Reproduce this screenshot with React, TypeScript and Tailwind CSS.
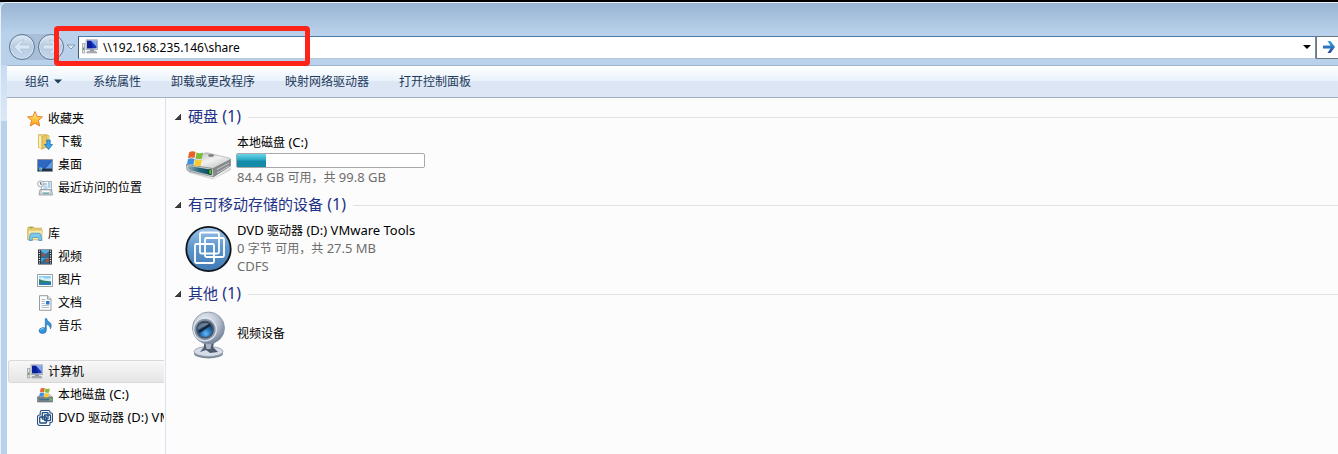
import React from 'react';

type IconProps = { className?: string };

const FONT = "font-['Noto_Sans','Noto_Sans_CJK_SC',sans-serif]";

// Latin runs are set one pixel larger than the Chinese text around them
function Mixed({ text, large = false }: { text: string; large?: boolean }) {
  const runs = text.match(/[\u3000-\uffef]+|[^\u3000-\uffef]+/g) ?? [];
  return (
    <>
      {runs.map((run, i) => (
        <span
          key={i}
          className={
            /[\u3000-\uffef]/.test(run)
              ? large ? 'text-[15px]' : 'text-[12px]'
              : large ? 'text-[16px]' : 'text-[13px]'
          }
        >
          {run}
        </span>
      ))}
    </>
  );
}

function ComputerIcon({ className = 'size-4' }: IconProps) {
  return (
    <svg viewBox="0 0 16 16" className={className} aria-hidden="true">
      <path d="M.5 4.500h2.200v9.500H.5z" fill="#e3e6e8" stroke="#7d8388" strokeWidth=".6" />
      <path d="M1 8.500h1.200V11H1z" fill="#62a155" />
      <path d="M4 .8h11.600v9.700H4z" fill="#dcdfe3" stroke="#8f96a0" strokeWidth=".7" />
      <path d="M5 1.800h9.600v7.500H5z" fill="#1739b8" />
      <path d="M9 1.800h5.600v6z" fill="#86abf0" />
      <path d="M5 1.800h4l2 7.500H5z" fill="#0b1f9b" />
      <path d="M8 10.500h4v2H8z" fill="#94999f" />
      <path d="M5.500 12.300h8.500l.8 1.700H4.700z" fill="#b9bdc2" stroke="#777c82" strokeWidth=".5" />
    </svg>
  );
}

function StarIcon({ className = 'size-4' }: IconProps) {
  return (
    <svg viewBox="0 0 16 16" className={className} aria-hidden="true">
      <defs>
        <linearGradient id="star" x1="0" y1="0" x2="0" y2="1">
          <stop offset="0" stopColor="#fff1a0" />
          <stop offset=".55" stopColor="#ffc43d" />
          <stop offset="1" stopColor="#ff9a1c" />
        </linearGradient>
      </defs>
      <path
        d="M8 .5l2.100 4.900 5.400.5-4.100 3.600 1.300 5.500L8 12.200 3.300 15l1.300-5.500L.5 5.900l5.400-.5z"
        fill="url(#star)"
        stroke="#e27a1c"
        strokeWidth=".9"
        strokeLinejoin="round"
      />
    </svg>
  );
}

function DownloadIcon({ className = 'size-4' }: IconProps) {
  return (
    <svg viewBox="0 0 16 16" className={className} aria-hidden="true">
      <path d="M1.500.7h8l2.500 1v11.800H1.500z" fill="#f6e295" stroke="#cdaa45" strokeWidth=".7" />
      <path d="M1.500.7l3.500 1.500v13l-3.500-1.700z" fill="#fbeeb4" stroke="#cdaa45" strokeWidth=".5" />
      <path d="M5 2.200l5-1.200v12l-5 2.200z" fill="#e8c661" stroke="#bf9b3b" strokeWidth=".5" />
      <path d="M9.800 6h3.400v4.500h2.400l-4.100 5-4.100-5h2.400z" fill="#39a5ea" stroke="#1665b5" strokeWidth=".7" />
    </svg>
  );
}

function DesktopIcon({ className = 'size-4' }: IconProps) {
  return (
    <svg viewBox="0 0 16 16" className={className} aria-hidden="true">
      <path d="M.5 2.500h15v12H.5z" fill="#2456ae" stroke="#8b9198" strokeWidth=".9" />
      <path d="M1 3h14L6 11.700H1z" fill="#2f68c0" />
      <path d="M15 4v7.700H8z" fill="#5d98e6" />
      <path d="M1 11.700h14V14H1z" fill="#26303e" />
      <circle cx="3.500" cy="12" r="1.900" fill="#3fa7e8" />
      <path d="M2.600 11h1v1h-1z" fill="#f07b3a" />
      <path d="M3.800 11h1v1h-1z" fill="#a5da54" />
    </svg>
  );
}

function RecentIcon({ className = 'size-4' }: IconProps) {
  return (
    <svg viewBox="0 0 16 16" className={className} aria-hidden="true">
      <path d="M4.500 1.500h10v9.500h-10z" fill="#f6f8f9" stroke="#91989d" strokeWidth=".7" />
      <path d="M6.500 5.500h4v5h-4z" fill="#b7d9ee" />
      <path d="M11 3h2.500M11 5h2.500M7 4h3M11 7h2.500" stroke="#579fc9" strokeWidth=".9" />
      <path d="M3 9.500h11.500l1 5.500H2z" fill="#cdd1d4" stroke="#838b91" strokeWidth=".7" />
      <path d="M5 10.700h7.500v1.500H5z" fill="#fff" />
      <path d="M6 13.200h6" stroke="#42a6a6" />
      <circle cx="3.600" cy="3.900" r="3.100" fill="#eef1f3" stroke="#9ca3a8" strokeWidth=".8" />
      <path d="M3.600 2v2.200h1.800" fill="none" stroke="#44515b" strokeWidth=".8" />
    </svg>
  );
}

function LibraryIcon({ className = 'size-4' }: IconProps) {
  return (
    <svg viewBox="0 0 16 16" className={className} aria-hidden="true">
      <path d="M.7 2.200l.8-1.300h5l1 1.300h7v11.500H.7z" fill="#e9cd72" stroke="#c9a546" strokeWidth=".7" />
      <path d="M2.500 1.700h3" stroke="#4ba84c" strokeWidth=".9" />
      <path d="M1.200 4.200h14.300l-.7 9.500H1.200z" fill="#f8e9a6" stroke="#d9b85c" strokeWidth=".6" />
      <path
        d="M2 14.500L3 9q.3-1.800 2-1.800h7q1.700 0 2 1.800l1 5.500h-3.300V12.500q0-1-1-1H6.300q-1 0-1 1v2z"
        fill="#7cc7ee"
        stroke="#3d8fc4"
        strokeWidth=".7"
      />
    </svg>
  );
}

function VideoIcon({ className = 'size-4' }: IconProps) {
  return (
    <svg viewBox="0 0 16 16" className={className} aria-hidden="true">
      <path d="M1 .5h14v15H1z" fill="#2b3136" />
      <path d="M4 1h8v6.500H4z" fill="#58aee0" />
      <path d="M4 8.500h8V15H4z" fill="#4c9dd4" />
      <path d="M4 2l4 3 4-2.500v5H4zM4 13l4-3.500 4 2.500v3H4z" fill="#336b91" />
      <path d="M5 5l2-1 1.500 2.500L6 7.500zM9 10l3-1v3l-3 2z" fill="#a94f3a" />
      <path d="M2.500 1.500v13M13.500 1.500v13" stroke="#e5e9e6" strokeWidth="1.300" strokeDasharray="1.200 1.200" />
    </svg>
  );
}

function PictureIcon({ className = 'size-4' }: IconProps) {
  return (
    <svg viewBox="0 0 16 16" className={className} aria-hidden="true">
      <path d="M.5 2.500h15v12H.5z" fill="#fff" stroke="#8f969c" strokeWidth=".9" />
      <path d="M2 4h12v9H2z" fill="#8dcff4" />
      <path d="M2 6q3-1.500 5 0t7 0v3H2z" fill="#d9f1fb" />
      <path d="M2 7l4 1.500 8 1v1.500H2z" fill="#2e8067" />
      <path d="M2 10.500h12V13H2z" fill="#237cb2" />
    </svg>
  );
}

function DocumentIcon({ className = 'size-4' }: IconProps) {
  return (
    <svg viewBox="0 0 16 16" className={className} aria-hidden="true">
      <path d="M2.500.7h8l3.500 3.500v11.100H2.500z" fill="#fcfdfd" stroke="#8a9196" strokeWidth=".9" />
      <path d="M10.500.7v3.500H14" fill="#dfe5e8" stroke="#8a9196" strokeWidth=".8" />
      <path d="M4.500 4.500h4M4.500 6.500h3.500M4.500 8.500h3.500M4.500 10.500h7.500M4.500 12.500h7.500" stroke="#a6aeb4" strokeWidth=".8" />
      <path d="M9 6h3.500v3.500H9z" fill="#3277cf" />
    </svg>
  );
}

function MusicIcon({ className = 'size-4' }: IconProps) {
  return (
    <svg viewBox="0 0 16 16" className={className} aria-hidden="true">
      <path
        d="M8.300.6h1.200q.5 2.200 3 3.600 3 2.200 1 6.600.1-3.400-4.200-4.800v6.400Q9.300 15 6 15.400q-3.800.1-4-2.500.1-2.700 3.500-3.200 1.700-.2 2.800.4z"
        fill="#3095de"
        stroke="#1a67aa"
        strokeWidth=".6"
      />
      <path d="M3.300 12q1-1.600 3.200-1.300" fill="none" stroke="#a6defc" />
    </svg>
  );
}

function WindowsFlag() {
  return (
    <>
      <path d="M2 2.500q3-2 6.500-.5L7.500 8Q4 6.600 1 8.500z" fill="#e8622a" />
      <path d="M9.500 2.500q3 1.500 6.500 0L15 8.500q-3.500 1.200-6.500-.2z" fill="#7fbc3c" />
      <path d="M.8 9.500q3-2 6.500-.5l-1 6Q3 13.500 0 15.500z" fill="#3e90dc" />
      <path d="M8.300 9.500q3.200 1.500 6.500 0l-1 6q-3.500 1.500-6.500 0z" fill="#fcca30" />
    </>
  );
}

function SmallDriveIcon({ className = 'size-4' }: IconProps) {
  return (
    <svg viewBox="0 0 16 16" className={className} aria-hidden="true">
      <path d="M1 9.500l3-2.500h8l3.500 3.500H.5z" fill="#d3d6d8" stroke="#85898c" strokeWidth=".5" />
      <path d="M.5 10h15v5H.5z" fill="#828b90" stroke="#5d6366" strokeWidth=".6" />
      <path d="M2 11.700h10v1.600H2z" fill="#3f7080" />
      <path d="M13 11.500h1.500v2H13z" fill="#54dc43" />
      <svg x="2" y="0" width="11" height="11" viewBox="0 0 16 17">
        <WindowsFlag />
      </svg>
    </svg>
  );
}

function SmallVmIcon({ className = 'size-4' }: IconProps) {
  return (
    <svg viewBox="0 0 16 16" className={className} aria-hidden="true">
      <path d="M5 .5h6.500q1.500 0 1.500 1.500v1h1q1.500 0 1.500 1.500V11q0 1.500-1.500 1.500h-1V14q0 1.500-1.500 1.500H3Q.5 15.500.5 13V7q0-2 2-2h.7V2.500Q3.200.5 5 .5z" fill="#fff" stroke="#234f80" strokeWidth="1.100" />
      <g fill="none" stroke="#234f80" strokeWidth="1.300">
        <rect x="5.300" y="2.700" width="5.700" height="6.500" rx=".5" />
        <rect x="7.500" y="5" width="6" height="5.700" rx=".5" />
        <rect x="2.700" y="7" width="6.800" height="6" rx=".5" />
      </g>
    </svg>
  );
}

function DriveIcon() {
  return (
    <svg viewBox="0 0 48 30" className="h-[30px] w-12" aria-hidden="true">
      <defs>
        <linearGradient id="driveTop" x1="0" y1="0" x2="1" y2="1">
          <stop offset="0" stopColor="#a9acad" />
          <stop offset=".5" stopColor="#f1f1f1" />
          <stop offset="1" stopColor="#b4b6b7" />
        </linearGradient>
        <linearGradient id="driveFront" x1="0" y1="0" x2="1" y2="0">
          <stop offset="0" stopColor="#93adb5" />
          <stop offset=".5" stopColor="#236579" />
          <stop offset="1" stopColor="#0c4557" />
        </linearGradient>
      </defs>
      <path d="M3 20l26 8.500L46 17v3L28 29.500 4 23z" fill="#d5d5d5" />
      <path d="M1.500 14.500L19 3.500q2-1 4-.5l21 5q1.500.5 1.500 2L28 19z" fill="url(#driveTop)" stroke="#9b9d9e" strokeWidth=".6" />
      <path d="M28 18.500L45.500 9.500v6.500L28.500 27z" fill="#85898b" stroke="#6f7376" strokeWidth=".5" />
      <path d="M32 19.500l12-6.500M32 23l12-7" stroke="#c7cacb" strokeWidth="1" />
      <path d="M1.500 14.500L28 18.500l.5 8.500L3.500 21q-1.500-.5-1.700-2z" fill="#ced2d3" stroke="#7a8184" strokeWidth=".7" />
      <path d="M3 15.800l23.500 4v5.500L5 20.300q-1.600-.5-1.800-2z" fill="url(#driveFront)" />
      <path d="M24 19.300h2.200v5.200L24 24.100z" fill="#68e62c" stroke="#0e3a26" strokeWidth=".7" />
      <ellipse cx="26" cy="5.500" rx="3" ry="1.200" fill="#77797a" />
      <svg x="2" y="0" width="16" height="17" viewBox="0 0 16 17">
        <WindowsFlag />
      </svg>
    </svg>
  );
}

function VmDiscIcon() {
  return (
    <svg viewBox="0 0 48 48" className="size-12" aria-hidden="true">
      <defs>
        <linearGradient id="disc" x1="0" y1="0" x2="0" y2="1">
          <stop offset="0" stopColor="#a0c5e8" />
          <stop offset=".45" stopColor="#5f98cd" />
          <stop offset="1" stopColor="#4079b3" />
        </linearGradient>
      </defs>
      <circle cx="23.500" cy="24" r="22.200" fill="url(#disc)" stroke="#10151b" strokeWidth="1.800" />
      <g fill="none" stroke="#fff" strokeWidth="1.800">
        <rect x="15" y="7.500" width="19" height="21" rx="1.500" />
        <rect x="20" y="13" width="19" height="19" rx="1.500" />
        <rect x="10" y="19" width="19" height="19" rx="1.500" />
      </g>
    </svg>
  );
}

function WebcamIcon() {
  return (
    <svg viewBox="0 0 48 48" className="size-12" aria-hidden="true">
      <defs>
        <radialGradient id="cam" cx=".4" cy=".3" r=".7">
          <stop offset="0" stopColor="#f2f5f9" />
          <stop offset=".6" stopColor="#b4bfcd" />
          <stop offset="1" stopColor="#75849a" />
        </radialGradient>
        <radialGradient id="lens" cx=".55" cy=".75" r=".7">
          <stop offset="0" stopColor="#63bdf7" />
          <stop offset=".4" stopColor="#2774bd" />
          <stop offset="1" stopColor="#14212f" />
        </radialGradient>
      </defs>
      <ellipse cx="23.500" cy="42.500" rx="14.500" ry="5" fill="#7c899b" />
      <ellipse cx="23.500" cy="40.500" rx="14.500" ry="5" fill="#d4dce5" stroke="#8e9bac" strokeWidth=".8" />
      <path d="M19 32h10l-1 4 5 5-8 1-4-3-6 2 4-5z" fill="#4e5b6c" />
      <path d="M20.500 33h6l-1 5h-4z" fill="#a9b6c5" />
      <circle cx="23.500" cy="17" r="16" fill="url(#cam)" stroke="#8794a6" strokeWidth=".8" />
      <circle cx="20" cy="18.500" r="11.300" fill="#8998ab" stroke="#e1e7ed" strokeWidth="1.200" />
      <circle cx="20" cy="18.500" r="8.300" fill="url(#lens)" stroke="#47576b" strokeWidth="1.500" />
      <path d="M12.500 19q0-7 7.500-7.500 4 .2 5.500 3l-8 1.500z" fill="#7c8da2" opacity=".8" />
      <path d="M14 21l11-7.500" stroke="#182534" strokeWidth="2.500" />
    </svg>
  );
}

function Caret({ className }: IconProps) {
  return (
    <svg viewBox="0 0 8 4" className={className} aria-hidden="true">
      <path d="M0 0h8L4 4z" fill="currentColor" />
    </svg>
  );
}

function HistoryButton({ label, forward = false }: { label: string; forward?: boolean }) {
  return (
    <button
      type="button"
      aria-label={label}
      className="flex size-[26px] items-center justify-center rounded-full border border-[#5f7690] bg-linear-to-b from-[#dde8f4] via-[#b9cce1] to-[#c4d8ed] shadow-[inset_0_0_0_1px_#d9e6f4]"
    >
      <svg viewBox="0 0 18 16" className={forward ? 'h-4 w-[18px] rotate-180' : 'h-4 w-[18px]'} aria-hidden="true">
        <path d="M8 1L1 8l7 7h3L7 10h10V6H7l4-5z" fill="#d9e6f3" stroke="#afc4da" strokeWidth=".8" />
      </svg>
    </button>
  );
}

const commands = ['系统属性', '卸载或更改程序', '映射网络驱动器', '打开控制面板'];

const navGroups = [
  {
    title: '收藏夹',
    Icon: StarIcon,
    items: [
      { name: '下载', Icon: DownloadIcon },
      { name: '桌面', Icon: DesktopIcon },
      { name: '最近访问的位置', Icon: RecentIcon },
    ],
  },
  {
    title: '库',
    Icon: LibraryIcon,
    items: [
      { name: '视频', Icon: VideoIcon },
      { name: '图片', Icon: PictureIcon },
      { name: '文档', Icon: DocumentIcon },
      { name: '音乐', Icon: MusicIcon },
    ],
  },
  {
    title: '计算机',
    Icon: ComputerIcon,
    selected: true,
    items: [
      { name: '本地磁盘 (C:)', Icon: SmallDriveIcon },
      { name: 'DVD 驱动器 (D:) VMware Tools', Icon: SmallVmIcon },
    ],
  },
];

function Section({ title, children }: { title: string; children: React.ReactNode }) {
  return (
    <section className="flex flex-col gap-1">
      <h2 className="flex h-6 items-center gap-[7px] text-[#1e3287]">
        <svg viewBox="0 0 6 6" className="size-[6px] shrink-0" aria-hidden="true">
          <path d="M6 0v6H0z" fill="#404040" stroke="#1c1c1c" strokeWidth=".6" />
        </svg>
        <span className="whitespace-pre leading-6">
          <Mixed text={title} large />
        </span>
        <span className="h-px flex-1 bg-[#e2e2e2]" />
      </h2>
      <div className="ml-[10px] flex min-h-[55px] items-start gap-1">{children}</div>
    </section>
  );
}

function AddressBar() {
  return (
    <div className="relative flex items-center pl-[9px]">
      <div className="flex items-center gap-[3px] rounded-full bg-[#a9bfd9]">
        <HistoryButton label="后退" />
        <HistoryButton label="前进" forward />
      </div>
      <button type="button" aria-label="最近的页面" className="flex w-[14px] justify-center text-[#e4edf7]">
        <Caret className="h-1 w-2 overflow-visible stroke-[#8199b5]" />
      </button>
      <div className="flex h-[23px] min-w-0 flex-1 items-center border border-t-[#4c7ca9] border-r-[#6e8ca8] border-b-[#b8c9d8] border-l-[#45586e] bg-white pl-[3px]">
        <ComputerIcon className="size-4 shrink-0" />
        <input
          type="text"
          aria-label="地址"
          defaultValue="\\192.168.235.146\share"
          className="ml-[5px] h-5 min-w-0 flex-1 text-[12px] text-black outline-none"
        />
        <button type="button" aria-label="以前的位置" className="flex h-5 w-4 items-center justify-center text-black">
          <Caret className="h-1 w-2" />
        </button>
      </div>
      <button
        type="button"
        aria-label="转到"
        className="flex h-[23px] w-[22px] items-center justify-center border-y border-l border-[#6b7683] bg-white pl-[2px]"
      >
        <svg viewBox="0 0 12 12" className="size-3" aria-hidden="true">
          <defs>
            <linearGradient id="go" x1="0" y1="0" x2="0" y2="1">
              <stop offset="0" stopColor="#34a6e1" />
              <stop offset="1" stopColor="#26469f" />
            </linearGradient>
          </defs>
          <path d="M4.500 0H7.500L12 6 7.500 12H4.500L7.500 7.500H0v-3h7.500z" fill="url(#go)" />
        </svg>
      </button>
      {/* Highlight over the typed path */}
      <div className="pointer-events-none absolute -top-2 left-[54px] h-10 w-64 rounded-[4px] border-[5px] border-[#fe2419]" />
    </div>
  );
}

export default function App() {
  return (
    <div className={`${FONT} flex min-h-screen flex-col border-t-2 border-black bg-[#b9d1ea] text-[12px] text-black`}>
      <header className="rounded-tl-md border-t border-l border-[#e8f1fa] bg-linear-to-b from-[#98b4d2] to-[#b9d1ea] to-[30px] pt-[31px] pb-[5px] [&>div]:-ml-px">
        <AddressBar />
      </header>

      <div className="flex flex-1 border-l border-[#e8f1fa]">
        <div className="w-[6px] shrink-0 bg-linear-to-b from-[#c8dcf1] from-0% to-[#dbe9f7] to-[56px]">
          <div className="mt-14 h-[calc(100%-56px)] bg-[#b9d1ea]" />
        </div>
        <div className="flex min-w-0 flex-1 flex-col bg-[#fcfcfc]">
          <div
            role="toolbar"
            aria-label="命令"
            className="flex h-[33px] items-center border-t border-b border-t-[#a0b5cd] border-b-[#a0afc3] bg-linear-to-b from-white from-0% via-[#e8f2fb] via-50% to-[#dce6f4] to-50% pl-[3px] text-[#1e395b]"
          >
            <button type="button" className="flex items-center gap-[5px] pr-4 pl-[15px]">
              组织
              <Caret className="h-[5px] w-2" />
            </button>
            {commands.map((name) => (
              <button key={name} type="button" className="px-[15px]">
                {name}
              </button>
            ))}
          </div>

          <div className="flex flex-1">
            <nav aria-label="导航窗格" className="flex w-[159px] shrink-0 flex-col gap-[23px] overflow-hidden border-r border-[#d6e3f3] pt-[9px] pr-px pl-px">
              {navGroups.map(({ title, Icon, items, selected }) => (
                <div key={title} className="overflow-hidden">
                  <a
                    href="#"
                    aria-current={selected ? 'page' : undefined}
                    className={
                      selected
                        ? 'flex h-[23px] items-center gap-[5px] rounded-l-[3px] border border-r-0 border-[#d9d9d9] bg-linear-to-b from-[#f8f8f8] to-[#e5e5e5] pl-[18px]'
                        : 'flex h-[23px] items-center gap-[5px] pl-[19px]'
                    }
                  >
                    <Icon className="size-4 shrink-0" />
                    {title}
                  </a>
                  {items.map(({ name, Icon: ItemIcon }) => (
                    <a key={name} href="#" className="flex h-[23px] items-center gap-[5px] pl-[29px]">
                      <ItemIcon className="size-4 shrink-0" />
                      <span className="whitespace-pre">
                        <Mixed text={name} />
                      </span>
                    </a>
                  ))}
                </div>
              ))}
            </nav>

            <main className="flex min-w-0 flex-1 flex-col gap-[5px] pt-[7px] pl-[9px]">
              <Section title="硬盘 (1)">
                <div className="flex h-[55px] items-end pb-2">
                  <DriveIcon />
                </div>
                <div className="-ml-px w-[189px] leading-[18px] text-[#6d6d6d]">
                  <div className="h-5 whitespace-pre pl-px text-black">
                    <Mixed text="本地磁盘 (C:)" />
                  </div>
                  <div
                    role="meter"
                    aria-label="已用空间"
                    aria-valuenow={15}
                    className="h-[15px] rounded-[2px] border border-[#a9a9a9] bg-white"
                  >
                    <div
                      className="h-full bg-linear-to-b from-[#69d5ea] via-[#28a9c6] via-45% to-[#138ba9] to-55%"
                      style={{ width: '15.4%' }}
                    />
                  </div>
                  <div className="h-[18px] whitespace-pre pl-px">
                    <Mixed text="84.4 GB 可用，共 99.8 GB" />
                  </div>
                </div>
              </Section>

              <Section title="有可移动存储的设备 (1)">
                <div className="pt-1">
                  <VmDiscIcon />
                </div>
                <div className="whitespace-pre pb-[2px] leading-[18px] text-[#6d6d6d]">
                  <div className="h-[18px] text-black">
                    <Mixed text="DVD 驱动器 (D:) VMware Tools" />
                  </div>
                  <div className="h-[18px]">
                    <Mixed text="0 字节 可用，共 27.5 MB" />
                  </div>
                  <div className="h-[18px]">
                    <Mixed text="CDFS" />
                  </div>
                </div>
              </Section>

              <Section title="其他 (1)">
                <div className="pt-px">
                  <WebcamIcon />
                </div>
                <div className="flex h-12 items-center">视频设备</div>
              </Section>
            </main>
          </div>
        </div>
      </div>
    </div>
  );
}
